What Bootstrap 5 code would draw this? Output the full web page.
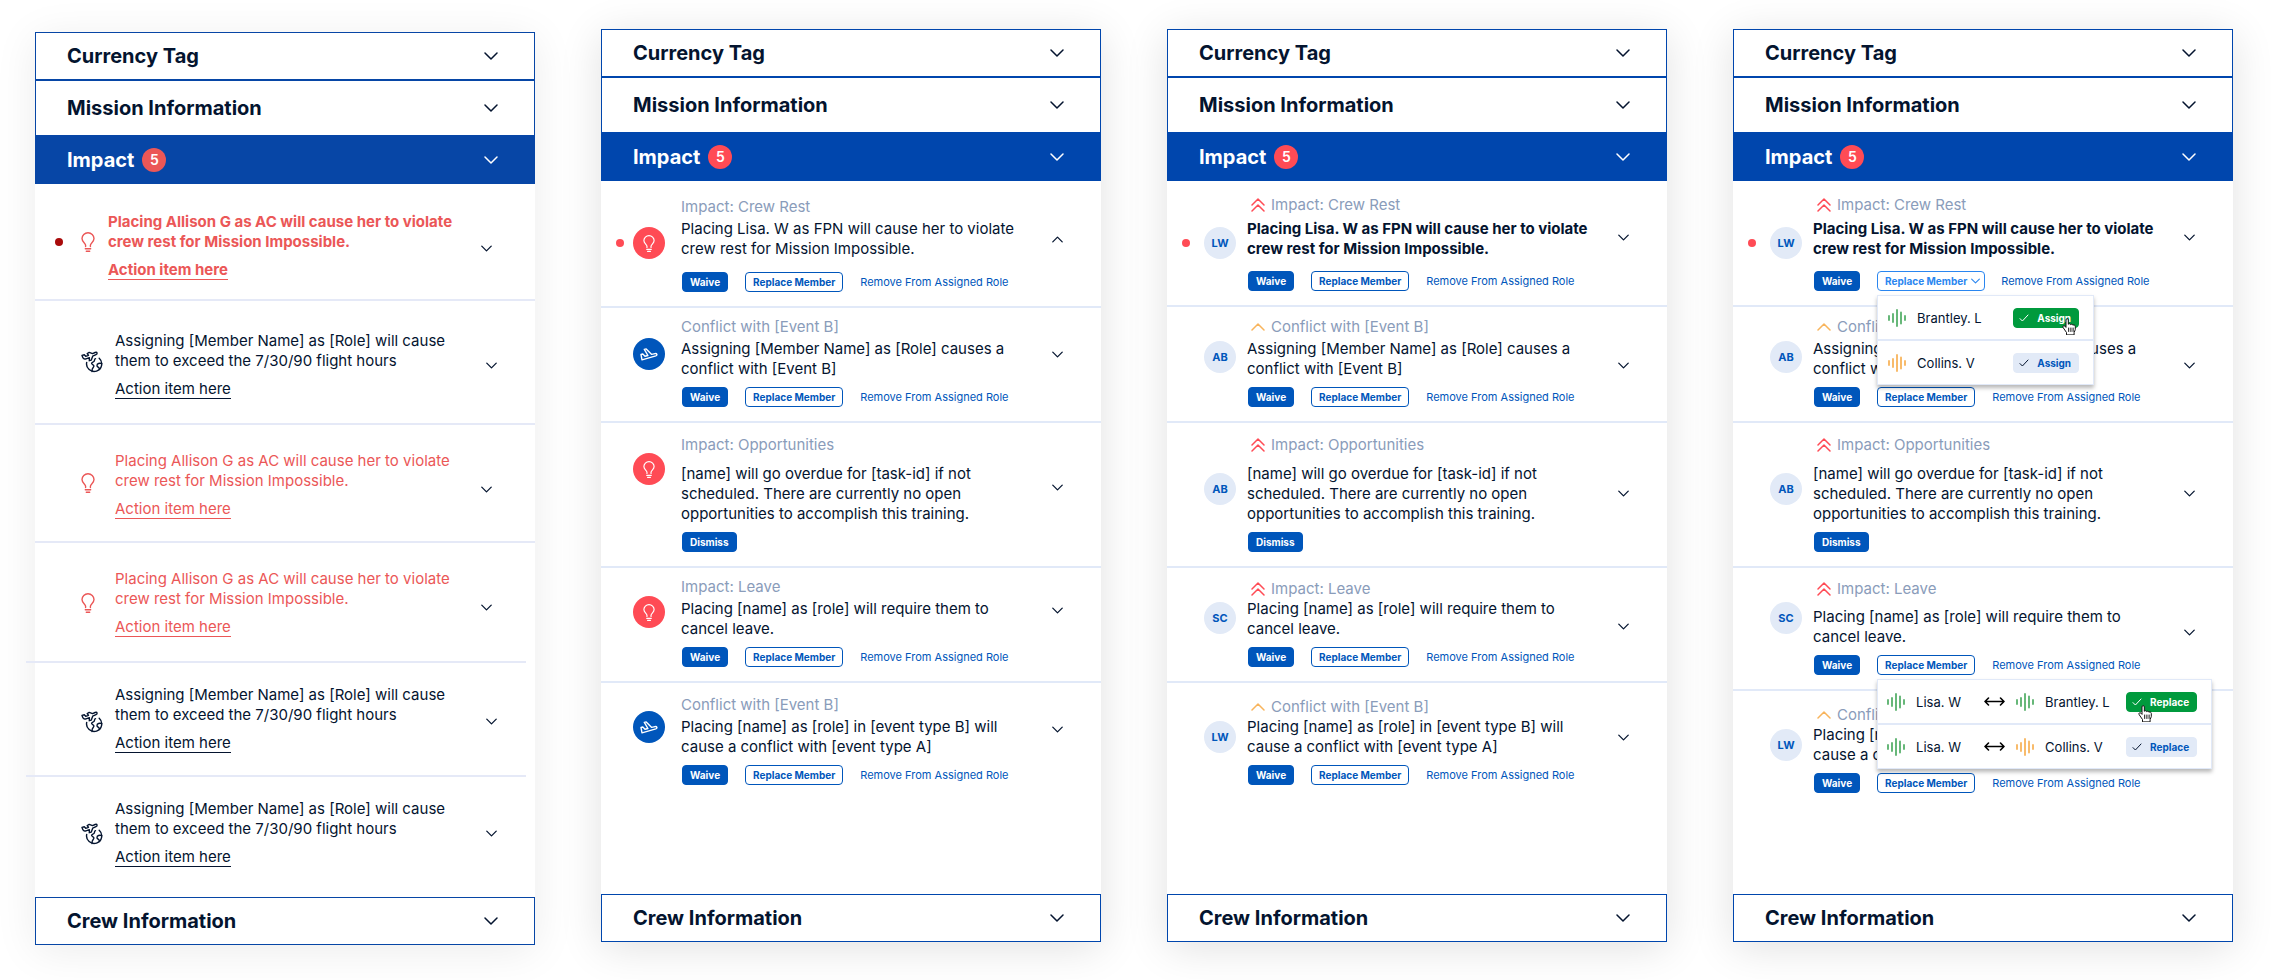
<!DOCTYPE html>
<html lang="en">
<head>
<meta charset="utf-8">
<meta name="viewport" content="width=device-width, initial-scale=1">
<title>Mission impact panels</title>
<link href="https://cdn.jsdelivr.net/npm/bootstrap@5.3.0/dist/css/bootstrap.min.css" rel="stylesheet">
<script src="https://cdn.jsdelivr.net/npm/bootstrap@5.3.0/dist/js/bootstrap.bundle.min.js"></script>
<style>
  :root { --ink: #04142f; --brand: #0046ad; --action: #0056bb; --alert: #ff4b55; --line: #e1e9f8; --tint: #e2eaf7; --muted: #8a9cba; --mark: 37px; --dot: 15px; }
  body { font-family: Inter, "Liberation Sans", sans-serif; font-size: 15px; line-height: 20px; color: var(--ink); background: #fff; }
  svg { fill: none; stroke: currentColor; stroke-linecap: round; stroke-linejoin: round; flex: none; }
  .board { display: grid; grid-template-columns: repeat(4, minmax(0, 1fr)); gap: 66px; padding: 29px 48px 35px 35px; }
  .panel { background: #fff; box-shadow: 0 6px 40px rgba(0, 0, 0, .12); margin-bottom: 3px; }
  .panel-legacy { --brand: #0746a6; --alert: #eb5757; --line: #e5e9f7; --mark: 46px; --dot: 20px; margin: 3px 0 0; box-shadow: 0 6px 40px rgba(0, 0, 0, .08); }
  .panel-icons { --mark: 32px; }

  .section-head { height: 48px; padding: 0 36px 0 31px; border: 1px solid var(--brand); background: #fff; color: var(--ink); font-size: 20px; line-height: 24px; font-weight: 700; }
  .section-head > svg { stroke-width: 1.5; }
  .section-tall { height: 56px; }
  .section-open { background: var(--brand); color: #fff; }
  .count { width: 24px; height: 24px; border-radius: 50%; background: var(--alert); color: #fff; font-size: 14px; font-weight: 600; }

  .notice { border-bottom: 2px solid var(--line); }
  .notice:last-child { border-bottom: 0; }
  .notice-shift { margin: 0 9px 0 -9px; padding-left: 9px; }
  .mark-col { display: grid; grid-template-columns: var(--mark) auto; align-items: center; justify-content: start; width: 80px; flex: none; }
  .mark-col > svg { stroke-width: 1.4; }
  .lead-short .mark-col { width: 73px; }
  .unread { grid-column: 1; width: 8px; height: 8px; margin-left: var(--dot); border-radius: 50%; background: var(--alert); }
  .panel-legacy .unread { background: #a90b0b; }
  .mark-col > svg, .disc { grid-column: 2; }
  .disc { width: 32px; height: 32px; border-radius: 50%; background: var(--tint); color: var(--action); font-size: 11px; font-weight: 700; }
  .disc svg { stroke-width: 1.4; }
  .disc-alert { background: var(--alert); color: #fff; }
  .disc-flight { background: var(--action); color: #fff; }
  .copy { max-width: 350px; }
  .topic { color: var(--muted); }
  .topic svg { margin: 0 6px 0 4px; stroke-width: 1.5; }
  .hot { color: var(--alert); }
  .toggle { width: 16px; height: 16px; margin-right: 36px; color: var(--ink); }
  .toggle svg { stroke-width: 1.6; }
  .toggle-in { margin-right: 41px; }
  .notice-shift .toggle { margin-right: 27px; }
  .notice-shift .toggle-in { margin-right: 32px; }
  .act-link { color: inherit; text-decoration: none; border-bottom: 1px solid; line-height: 18px; }

  .actions { gap: 17px; margin-left: 1px; }
  .chip { height: 20px; padding: 0 7px; border: 1px solid var(--action); border-radius: 4px; background: #fff; color: var(--action); font-size: 10px; line-height: 18px; font-weight: 700; white-space: nowrap; }
  .chip-solid { background: var(--action); color: #fff; }
  .chip-open { border-color: #2a86f0; color: #2a86f0; padding-right: 4px; margin-right: -1px; }
  .chip-open svg { stroke-width: 1.7; }
  .chip-go, .chip-idle { padding: 0 7px 0 5px; }
  .chip-go { background: #009a3d; border-color: #009a3d; color: #fff; }
  .chip-idle { background: var(--tint); border-color: var(--tint); }
  .chip-idle svg { color: var(--ink); }
  .remove-link { color: var(--action); font-size: 11px; text-decoration: none; white-space: nowrap; }

  .picker { top: 24px; left: 0; z-index: 5; width: 217px; background: #fff; border: 1px solid var(--line); box-shadow: 0 3px 4px rgba(0, 0, 0, .28); font-size: 13px; }
  .picker-swap { width: 335px; }
  .picker-row { display: grid; grid-template-columns: 18px 1fr auto; column-gap: 11px; align-items: center; height: 43px; padding: 0 14px 0 10px; }
  .picker-swap .picker-row { grid-template-columns: 18px 57px 21px 18px 1fr auto; padding-left: 9px; }
  .picker-row + .picker-row { border-top: 2px solid var(--line); height: 45px; }
  .good { color: #57b06b; }
  .fair { color: #f8b45c; }
  .pointer { top: 10px; left: 49px; z-index: 6; }
  .picker-swap .pointer { left: 12px; top: 13px; }

  .gap-top-2 { margin-top: 2px; } .gap-top-4 { margin-top: 4px; } .gap-top-8 { margin-top: 8px; } .gap-top-9 { margin-top: 9px; } .gap-top-12 { margin-top: 12px; } .gap-top-13 { margin-top: 13px; }
  .pt-9 { padding-top: 9px; } .pt-10 { padding-top: 10px; } .pt-11 { padding-top: 11px; } .pt-12 { padding-top: 12px; } .pt-14 { padding-top: 14px; } .pt-16 { padding-top: 16px; }
  .pt-22 { padding-top: 22px; } .pt-26 { padding-top: 26px; } .pt-28 { padding-top: 28px; } .pt-30 { padding-top: 30px; }
  .pb-14 { padding-bottom: 14px; } .pb-19 { padding-bottom: 19px; } .pb-22 { padding-bottom: 22px; } .pb-24 { padding-bottom: 24px; } .pb-30 { padding-bottom: 30px; }
  .drop-28 { margin-top: 28px; } .drop-30 { margin-top: 30px; } .drop-34 { margin-top: 34px; } .drop-38 { margin-top: 38px; }
  .drop-46 { margin-top: 46px; } .drop-48 { margin-top: 48px; } .drop-50 { margin-top: 50px; } .drop-56 { margin-top: 56px; } .drop-62 { margin-top: 62px; }
</style>
</head>
<body>
<svg width="0" height="0" class="d-none">
  <symbol id="down" viewBox="0 0 14 8"><path d="M1 1l6 6 6-6"/></symbol>
  <symbol id="up" viewBox="0 0 14 8"><path d="M1 7l6-6 6 6"/></symbol>
  <symbol id="up2" viewBox="0 0 14 14"><path d="M1 7l6-6 6 6M1 13l6-6 6 6"/></symbol>
  <symbol id="bulb" viewBox="0 0 14 20"><path d="M4.600 14.600v-1.400C4.600 11 1 10 1 6.600a6 5.800 0 0 1 12 0c0 3.400-3.600 4.400-3.600 6.600v1.400"/><path d="M4.300 16.800h5.400M5.300 19.200h3.400"/></symbol>
  <symbol id="landing" viewBox="0 0 18 13"><path d="M1 6.500l1.800-.5 2.200 2.200 2.900-.7L4.300 1.400l1.900-.5 5.500 5.500 3.300-.8c2-.4 2.600 1.600.8 2.200L2 11.800z"/></symbol>
  <symbol id="trip" viewBox="0 0 22 22"><path d="M1 4.400l2.300-.6 1.400 1.500 2.800-1-1.300-1.800 2-1.100 3.300 1.200 2.600-1.100c2.200-.7 2.700 1.500.9 2.200l-3.300 1.500-1.400 3.900-2 .6.100-3-3.400 1.200C2.700 8.500 2.100 7.500 1 4.400z"/><path d="M18.200 7.200a7.600 7.600 0 1 1-12.500 4.200"/><path d="M14.500 7.600c-1.800.6-.3 2-1.600 2.900-1 .7-2.500.8-2.300 2 .2 1.300 2.300.9 2.300 2.600 0 1.500-2.500 1.800-1.800 5.400M20.700 12.600c-2-.8-4.800-.1-4.700 2 .1 2 2.600 1.200 2.500 4"/></symbol>
  <symbol id="bars" viewBox="0 0 18 18"><path stroke-width="1.800" d="M1 7v4M5 5v8M9 1v16M13 3.500v11M17 7v4"/></symbol>
  <symbol id="tick" viewBox="0 0 10 8"><path d="M1 4.600l2.400 2.400L9 1"/></symbol>
  <symbol id="swap" viewBox="0 0 21 9"><path stroke-width="1.600" d="M1 4.500h19M4.500 1L1 4.500 4.500 8M16.500 1L20 4.500 16.500 8"/></symbol>
  <symbol id="hand" viewBox="0 0 15 17"><path fill="#fff" stroke="#111" d="M4.500 16.500v-2L1.200 9.700C.2 8.200 1.900 7 3 8.200l1 1.200V1.900c0-1.700 2.300-1.700 2.300 0v4.400c.6-.9 2-.7 2.300.3.700-.7 2-.4 2.300.6.900-.6 2.300-.1 2.400 1.200v3.200l-1.200 3v1.900z"/><path stroke="#111" d="M6.700 10v3.500M8.900 10v3.500M11.100 10v3.500"/></symbol>
</svg>

<main class="board">

  <section class="panel panel-legacy d-flex flex-column">
    <button class="section-head d-flex align-items-center justify-content-between">Currency Tag <svg width="14" height="8"><use href="#down"/></svg></button>
    <button class="section-head section-tall d-flex align-items-center justify-content-between">Mission Information <svg width="14" height="8"><use href="#down"/></svg></button>
    <button class="section-head section-open d-flex align-items-center justify-content-between"><span class="d-flex align-items-center gap-2">Impact <span class="count d-flex align-items-center justify-content-center">5</span></span><svg width="14" height="8"><use href="#down"/></svg></button>
    <ul class="list-unstyled mb-0">
      <li class="notice lead-short d-flex align-items-start fw-bold">
        <div class="mark-col drop-48"><span class="unread"></span><svg width="14" height="20" class="hot"><use href="#bulb"/></svg></div>
        <div class="flex-grow-1 pt-28 pb-19 hot">
          <div class="copy">Placing Allison G as AC will cause her to violate crew rest for Mission Impossible.</div>
          <div class="gap-top-8"><a class="act-link" href="#">Action item here</a></div>
        </div>
        <button class="toggle toggle-in drop-56 btn p-0 border-0 d-flex align-items-center justify-content-center" aria-label="Expand"><svg width="11" height="7"><use href="#down"/></svg></button>
      </li>
      <li class="notice d-flex align-items-start">
        <div class="mark-col drop-50"><svg width="22" height="22"><use href="#trip"/></svg></div>
        <div class="flex-grow-1 pt-30 pb-24">
          <div class="copy">Assigning [Member Name] as [Role] will cause them to exceed the 7/30/90 flight hours</div>
          <div class="gap-top-8"><a class="act-link" href="#">Action item here</a></div>
        </div>
        <button class="toggle drop-56 btn p-0 border-0 d-flex align-items-center justify-content-center" aria-label="Expand"><svg width="11" height="7"><use href="#down"/></svg></button>
      </li>
      <li class="notice d-flex align-items-start">
        <div class="mark-col drop-48"><svg width="14" height="20" class="hot"><use href="#bulb"/></svg></div>
        <div class="flex-grow-1 pt-26 pb-22 hot">
          <div class="copy">Placing Allison G as AC will cause her to violate crew rest for Mission Impossible.</div>
          <div class="gap-top-8"><a class="act-link" href="#">Action item here</a></div>
        </div>
        <button class="toggle toggle-in drop-56 btn p-0 border-0 d-flex align-items-center justify-content-center" aria-label="Expand"><svg width="11" height="7"><use href="#down"/></svg></button>
      </li>
      <li class="notice notice-shift d-flex align-items-start">
        <div class="mark-col drop-50"><svg width="14" height="20" class="hot"><use href="#bulb"/></svg></div>
        <div class="flex-grow-1 pt-26 pb-24 hot">
          <div class="copy">Placing Allison G as AC will cause her to violate crew rest for Mission Impossible.</div>
          <div class="gap-top-8"><a class="act-link" href="#">Action item here</a></div>
        </div>
        <button class="toggle toggle-in drop-56 btn p-0 border-0 d-flex align-items-center justify-content-center" aria-label="Expand"><svg width="11" height="7"><use href="#down"/></svg></button>
      </li>
      <li class="notice notice-shift d-flex align-items-start">
        <div class="mark-col drop-48"><svg width="22" height="22"><use href="#trip"/></svg></div>
        <div class="flex-grow-1 pt-22 pb-22">
          <div class="copy">Assigning [Member Name] as [Role] will cause them to exceed the 7/30/90 flight hours</div>
          <div class="gap-top-8"><a class="act-link" href="#">Action item here</a></div>
        </div>
        <button class="toggle drop-50 btn p-0 border-0 d-flex align-items-center justify-content-center" aria-label="Expand"><svg width="11" height="7"><use href="#down"/></svg></button>
      </li>
      <li class="notice d-flex align-items-start">
        <div class="mark-col drop-46"><svg width="22" height="22"><use href="#trip"/></svg></div>
        <div class="flex-grow-1 pt-22 pb-30">
          <div class="copy">Assigning [Member Name] as [Role] will cause them to exceed the 7/30/90 flight hours</div>
          <div class="gap-top-8"><a class="act-link" href="#">Action item here</a></div>
        </div>
        <button class="toggle drop-48 btn p-0 border-0 d-flex align-items-center justify-content-center" aria-label="Expand"><svg width="11" height="7"><use href="#down"/></svg></button>
      </li>
    </ul>
    <button class="section-head mt-auto d-flex align-items-center justify-content-between">Crew Information <svg width="14" height="8"><use href="#down"/></svg></button>
  </section>

  <section class="panel panel-icons d-flex flex-column">
    <button class="section-head d-flex align-items-center justify-content-between">Currency Tag <svg width="14" height="8"><use href="#down"/></svg></button>
    <button class="section-head section-tall d-flex align-items-center justify-content-between">Mission Information <svg width="14" height="8"><use href="#down"/></svg></button>
    <button class="section-head section-open d-flex align-items-center justify-content-between"><span class="d-flex align-items-center gap-2">Impact <span class="count d-flex align-items-center justify-content-center">5</span></span><svg width="14" height="8"><use href="#down"/></svg></button>
    <ul class="list-unstyled mb-0">
      <li class="notice d-flex align-items-start">
        <div class="mark-col drop-46"><span class="unread"></span><span class="disc disc-alert d-flex align-items-center justify-content-center"><svg width="12" height="17"><use href="#bulb"/></svg></span></div>
        <div class="flex-grow-1 pt-16 pb-14">
          <div class="topic">Impact: Crew Rest</div>
          <div class="copy gap-top-2">Placing Lisa. W as FPN will cause her to violate crew rest for Mission Impossible.</div>
          <div class="actions d-flex align-items-center gap-top-13"><button class="chip chip-solid">Waive</button><button class="chip">Replace Member</button><a class="remove-link" href="#">Remove From Assigned Role</a></div>
        </div>
        <button class="toggle drop-50 btn p-0 border-0 d-flex align-items-center justify-content-center" aria-label="Collapse"><svg width="11" height="7"><use href="#up"/></svg></button>
      </li>
      <li class="notice d-flex align-items-start">
        <div class="mark-col drop-30"><span class="disc disc-flight d-flex align-items-center justify-content-center"><svg width="18" height="13"><use href="#landing"/></svg></span></div>
        <div class="flex-grow-1 pt-9 pb-14">
          <div class="topic">Conflict with [Event B]</div>
          <div class="copy gap-top-2">Assigning [Member Name] as [Role] causes a conflict with [Event B]</div>
          <div class="actions d-flex align-items-center gap-top-8"><button class="chip chip-solid">Waive</button><button class="chip">Replace Member</button><a class="remove-link" href="#">Remove From Assigned Role</a></div>
        </div>
        <button class="toggle drop-38 btn p-0 border-0 d-flex align-items-center justify-content-center" aria-label="Expand"><svg width="11" height="7"><use href="#down"/></svg></button>
      </li>
      <li class="notice d-flex align-items-start">
        <div class="mark-col drop-30"><span class="disc disc-alert d-flex align-items-center justify-content-center"><svg width="12" height="17"><use href="#bulb"/></svg></span></div>
        <div class="flex-grow-1 pt-12 pb-14">
          <div class="topic">Impact: Opportunities</div>
          <div class="copy gap-top-9">[name] will go overdue for [task-id] if not scheduled. There are currently no open opportunities to accomplish this training.</div>
          <div class="actions d-flex align-items-center gap-top-8"><button class="chip chip-solid">Dismiss</button></div>
        </div>
        <button class="toggle drop-56 btn p-0 border-0 d-flex align-items-center justify-content-center" aria-label="Expand"><svg width="11" height="7"><use href="#down"/></svg></button>
      </li>
      <li class="notice d-flex align-items-start">
        <div class="mark-col drop-28"><span class="disc disc-alert d-flex align-items-center justify-content-center"><svg width="12" height="17"><use href="#bulb"/></svg></span></div>
        <div class="flex-grow-1 pt-9 pb-14">
          <div class="topic">Impact: Leave</div>
          <div class="copy gap-top-2">Placing [name] as [role] will require them to cancel leave.</div>
          <div class="actions d-flex align-items-center gap-top-8"><button class="chip chip-solid">Waive</button><button class="chip">Replace Member</button><a class="remove-link" href="#">Remove From Assigned Role</a></div>
        </div>
        <button class="toggle drop-34 btn p-0 border-0 d-flex align-items-center justify-content-center" aria-label="Expand"><svg width="11" height="7"><use href="#down"/></svg></button>
      </li>
      <li class="notice d-flex align-items-start">
        <div class="mark-col drop-28"><span class="disc disc-flight d-flex align-items-center justify-content-center"><svg width="18" height="13"><use href="#landing"/></svg></span></div>
        <div class="flex-grow-1 pt-12 pb-14">
          <div class="topic">Conflict with [Event B]</div>
          <div class="copy gap-top-2">Placing [name] as [role] in [event type B] will cause a conflict with [event type A]</div>
          <div class="actions d-flex align-items-center gap-top-8"><button class="chip chip-solid">Waive</button><button class="chip">Replace Member</button><a class="remove-link" href="#">Remove From Assigned Role</a></div>
        </div>
        <button class="toggle drop-38 btn p-0 border-0 d-flex align-items-center justify-content-center" aria-label="Expand"><svg width="11" height="7"><use href="#down"/></svg></button>
      </li>
    </ul>
    <button class="section-head mt-auto d-flex align-items-center justify-content-between">Crew Information <svg width="14" height="8"><use href="#down"/></svg></button>
  </section>

  <section class="panel d-flex flex-column">
    <button class="section-head d-flex align-items-center justify-content-between">Currency Tag <svg width="14" height="8"><use href="#down"/></svg></button>
    <button class="section-head section-tall d-flex align-items-center justify-content-between">Mission Information <svg width="14" height="8"><use href="#down"/></svg></button>
    <button class="section-head section-open d-flex align-items-center justify-content-between"><span class="d-flex align-items-center gap-2">Impact <span class="count d-flex align-items-center justify-content-center">5</span></span><svg width="14" height="8"><use href="#down"/></svg></button>
    <ul class="list-unstyled mb-0">
      <li class="notice d-flex align-items-start">
        <div class="mark-col drop-46"><span class="unread"></span><span class="disc d-flex align-items-center justify-content-center">LW</span></div>
        <div class="flex-grow-1 pt-14 pb-14">
          <div class="topic d-flex align-items-center"><svg width="14" height="14" class="hot"><use href="#up2"/></svg>Impact: Crew Rest</div>
          <div class="copy fw-bold gap-top-4">Placing Lisa. W as FPN will cause her to violate crew rest for Mission Impossible.</div>
          <div class="actions d-flex align-items-center gap-top-12"><button class="chip chip-solid">Waive</button><button class="chip">Replace Member</button><a class="remove-link" href="#">Remove From Assigned Role</a></div>
        </div>
        <button class="toggle drop-48 btn p-0 border-0 d-flex align-items-center justify-content-center" aria-label="Expand"><svg width="11" height="7"><use href="#down"/></svg></button>
      </li>
      <li class="notice d-flex align-items-start">
        <div class="mark-col drop-34"><span class="disc d-flex align-items-center justify-content-center">AB</span></div>
        <div class="flex-grow-1 pt-10 pb-14">
          <div class="topic d-flex align-items-center"><svg width="14" height="8" class="fair"><use href="#up"/></svg>Conflict with [Event B]</div>
          <div class="copy gap-top-2">Assigning [Member Name] as [Role] causes a conflict with [Event B]</div>
          <div class="actions d-flex align-items-center gap-top-8"><button class="chip chip-solid">Waive</button><button class="chip">Replace Member</button><a class="remove-link" href="#">Remove From Assigned Role</a></div>
        </div>
        <button class="toggle drop-50 btn p-0 border-0 d-flex align-items-center justify-content-center" aria-label="Expand"><svg width="11" height="7"><use href="#down"/></svg></button>
      </li>
      <li class="notice d-flex align-items-start">
        <div class="mark-col drop-50"><span class="disc d-flex align-items-center justify-content-center">AB</span></div>
        <div class="flex-grow-1 pt-12 pb-14">
          <div class="topic d-flex align-items-center"><svg width="14" height="14" class="hot"><use href="#up2"/></svg>Impact: Opportunities</div>
          <div class="copy gap-top-9">[name] will go overdue for [task-id] if not scheduled. There are currently no open opportunities to accomplish this training.</div>
          <div class="actions d-flex align-items-center gap-top-8"><button class="chip chip-solid">Dismiss</button></div>
        </div>
        <button class="toggle drop-62 btn p-0 border-0 d-flex align-items-center justify-content-center" aria-label="Expand"><svg width="11" height="7"><use href="#down"/></svg></button>
      </li>
      <li class="notice d-flex align-items-start">
        <div class="mark-col drop-34"><span class="disc d-flex align-items-center justify-content-center">SC</span></div>
        <div class="flex-grow-1 pt-11 pb-14">
          <div class="topic d-flex align-items-center"><svg width="14" height="14" class="hot"><use href="#up2"/></svg>Impact: Leave</div>
          <div class="copy">Placing [name] as [role] will require them to cancel leave.</div>
          <div class="actions d-flex align-items-center gap-top-8"><button class="chip chip-solid">Waive</button><button class="chip">Replace Member</button><a class="remove-link" href="#">Remove From Assigned Role</a></div>
        </div>
        <button class="toggle drop-50 btn p-0 border-0 d-flex align-items-center justify-content-center" aria-label="Expand"><svg width="11" height="7"><use href="#down"/></svg></button>
      </li>
      <li class="notice d-flex align-items-start">
        <div class="mark-col drop-38"><span class="disc d-flex align-items-center justify-content-center">LW</span></div>
        <div class="flex-grow-1 pt-14 pb-14">
          <div class="topic d-flex align-items-center"><svg width="14" height="8" class="fair"><use href="#up"/></svg>Conflict with [Event B]</div>
          <div class="copy">Placing [name] as [role] in [event type B] will cause a conflict with [event type A]</div>
          <div class="actions d-flex align-items-center gap-top-8"><button class="chip chip-solid">Waive</button><button class="chip">Replace Member</button><a class="remove-link" href="#">Remove From Assigned Role</a></div>
        </div>
        <button class="toggle drop-46 btn p-0 border-0 d-flex align-items-center justify-content-center" aria-label="Expand"><svg width="11" height="7"><use href="#down"/></svg></button>
      </li>
    </ul>
    <button class="section-head mt-auto d-flex align-items-center justify-content-between">Crew Information <svg width="14" height="8"><use href="#down"/></svg></button>
  </section>

  <section class="panel d-flex flex-column">
    <button class="section-head d-flex align-items-center justify-content-between">Currency Tag <svg width="14" height="8"><use href="#down"/></svg></button>
    <button class="section-head section-tall d-flex align-items-center justify-content-between">Mission Information <svg width="14" height="8"><use href="#down"/></svg></button>
    <button class="section-head section-open d-flex align-items-center justify-content-between"><span class="d-flex align-items-center gap-2">Impact <span class="count d-flex align-items-center justify-content-center">5</span></span><svg width="14" height="8"><use href="#down"/></svg></button>
    <ul class="list-unstyled mb-0">
      <li class="notice d-flex align-items-start">
        <div class="mark-col drop-46"><span class="unread"></span><span class="disc d-flex align-items-center justify-content-center">LW</span></div>
        <div class="flex-grow-1 pt-14 pb-14">
          <div class="topic d-flex align-items-center"><svg width="14" height="14" class="hot"><use href="#up2"/></svg>Impact: Crew Rest</div>
          <div class="copy fw-bold gap-top-4">Placing Lisa. W as FPN will cause her to violate crew rest for Mission Impossible.</div>
          <div class="actions d-flex align-items-center gap-top-12">
            <button class="chip chip-solid">Waive</button>
            <div class="position-relative">
              <button class="chip chip-open d-flex align-items-center gap-1" aria-expanded="true">Replace Member <svg width="9" height="6"><use href="#down"/></svg></button>
              <div class="picker position-absolute">
                <div class="picker-row"><svg width="18" height="18" class="good"><use href="#bars"/></svg><span>Brantley. L</span><div class="position-relative"><button class="chip chip-go d-flex align-items-center"><svg width="10" height="8" class="me-2"><use href="#tick"/></svg>Assign</button><svg class="pointer position-absolute" width="15" height="17"><use href="#hand"/></svg></div></div>
                <div class="picker-row"><svg width="18" height="18" class="fair"><use href="#bars"/></svg><span>Collins. V</span><button class="chip chip-idle d-flex align-items-center"><svg width="10" height="8" class="me-2"><use href="#tick"/></svg>Assign</button></div>
              </div>
            </div>
            <a class="remove-link" href="#">Remove From Assigned Role</a>
          </div>
        </div>
        <button class="toggle drop-48 btn p-0 border-0 d-flex align-items-center justify-content-center" aria-label="Expand"><svg width="11" height="7"><use href="#down"/></svg></button>
      </li>
      <li class="notice d-flex align-items-start">
        <div class="mark-col drop-34"><span class="disc d-flex align-items-center justify-content-center">AB</span></div>
        <div class="flex-grow-1 pt-10 pb-14">
          <div class="topic d-flex align-items-center"><svg width="14" height="8" class="fair"><use href="#up"/></svg>Conflict with [Event B]</div>
          <div class="copy gap-top-2">Assigning [Member Name] as [Role] causes a conflict with [Event B]</div>
          <div class="actions d-flex align-items-center gap-top-8"><button class="chip chip-solid">Waive</button><button class="chip">Replace Member</button><a class="remove-link" href="#">Remove From Assigned Role</a></div>
        </div>
        <button class="toggle drop-50 btn p-0 border-0 d-flex align-items-center justify-content-center" aria-label="Expand"><svg width="11" height="7"><use href="#down"/></svg></button>
      </li>
      <li class="notice d-flex align-items-start">
        <div class="mark-col drop-50"><span class="disc d-flex align-items-center justify-content-center">AB</span></div>
        <div class="flex-grow-1 pt-12 pb-14">
          <div class="topic d-flex align-items-center"><svg width="14" height="14" class="hot"><use href="#up2"/></svg>Impact: Opportunities</div>
          <div class="copy gap-top-9">[name] will go overdue for [task-id] if not scheduled. There are currently no open opportunities to accomplish this training.</div>
          <div class="actions d-flex align-items-center gap-top-8"><button class="chip chip-solid">Dismiss</button></div>
        </div>
        <button class="toggle drop-62 btn p-0 border-0 d-flex align-items-center justify-content-center" aria-label="Expand"><svg width="11" height="7"><use href="#down"/></svg></button>
      </li>
      <li class="notice d-flex align-items-start">
        <div class="mark-col drop-34"><span class="disc d-flex align-items-center justify-content-center">SC</span></div>
        <div class="flex-grow-1 pt-11 pb-14">
          <div class="topic d-flex align-items-center"><svg width="14" height="14" class="hot"><use href="#up2"/></svg>Impact: Leave</div>
          <div class="copy gap-top-8">Placing [name] as [role] will require them to cancel leave.</div>
          <div class="actions d-flex align-items-center gap-top-8">
            <button class="chip chip-solid">Waive</button>
            <div class="position-relative">
              <button class="chip d-block" aria-expanded="true">Replace Member</button>
              <div class="picker picker-swap position-absolute">
                <div class="picker-row"><svg width="18" height="18" class="good"><use href="#bars"/></svg><span>Lisa. W</span><svg width="21" height="9" class="text-black"><use href="#swap"/></svg><svg width="18" height="18" class="good"><use href="#bars"/></svg><span>Brantley. L</span><div class="position-relative"><button class="chip chip-go d-flex align-items-center"><svg width="10" height="8" class="me-2"><use href="#tick"/></svg>Replace</button><svg class="pointer position-absolute" width="15" height="17"><use href="#hand"/></svg></div></div>
                <div class="picker-row"><svg width="18" height="18" class="good"><use href="#bars"/></svg><span>Lisa. W</span><svg width="21" height="9" class="text-black"><use href="#swap"/></svg><svg width="18" height="18" class="fair"><use href="#bars"/></svg><span>Collins. V</span><button class="chip chip-idle d-flex align-items-center"><svg width="10" height="8" class="me-2"><use href="#tick"/></svg>Replace</button></div>
              </div>
            </div>
            <a class="remove-link" href="#">Remove From Assigned Role</a>
          </div>
        </div>
        <button class="toggle drop-56 btn p-0 border-0 d-flex align-items-center justify-content-center" aria-label="Expand"><svg width="11" height="7"><use href="#down"/></svg></button>
      </li>
      <li class="notice d-flex align-items-start">
        <div class="mark-col drop-38"><span class="disc d-flex align-items-center justify-content-center">LW</span></div>
        <div class="flex-grow-1 pt-14 pb-14">
          <div class="topic d-flex align-items-center"><svg width="14" height="8" class="fair"><use href="#up"/></svg>Conflict with [Event B]</div>
          <div class="copy">Placing [name] as [role] in [event type B] will cause a conflict with [event type A]</div>
          <div class="actions d-flex align-items-center gap-top-8"><button class="chip chip-solid">Waive</button><button class="chip">Replace Member</button><a class="remove-link" href="#">Remove From Assigned Role</a></div>
        </div>
      </li>
    </ul>
    <button class="section-head mt-auto d-flex align-items-center justify-content-between">Crew Information <svg width="14" height="8"><use href="#down"/></svg></button>
  </section>

</main>
</body>
</html>
